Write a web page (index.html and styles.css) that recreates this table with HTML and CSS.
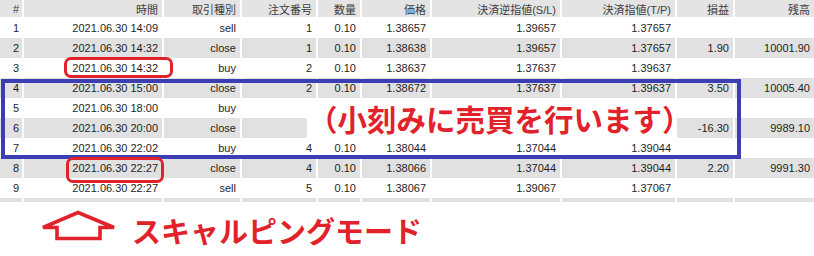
FILE: index.html
```html
<!DOCTYPE html>
<html lang="ja">
<head>
<meta charset="utf-8">
<title>取引履歴</title>
<link rel="stylesheet" href="styles.css">
</head>
<body>
<div class="shot">
  <div class="table">
    <div class="row head">
      <div class="c num">#</div><div class="c">時間</div><div class="c">取引種別</div><div class="c">注文番号</div><div class="c">数量</div><div class="c">価格</div><div class="c">決済逆指値(S/L)</div><div class="c">決済指値(T/P)</div><div class="c">損益</div><div class="c">残高</div>
    </div>
    <div class="row odd">
      <div class="c num">1</div><div class="c">2021.06.30 14:09</div><div class="c">sell</div><div class="c">1</div><div class="c">0.10</div><div class="c">1.38657</div><div class="c">1.39657</div><div class="c">1.37657</div><div class="c"></div><div class="c"></div>
    </div>
    <div class="row even">
      <div class="c num">2</div><div class="c">2021.06.30 14:32</div><div class="c">close</div><div class="c">1</div><div class="c">0.10</div><div class="c">1.38638</div><div class="c">1.39657</div><div class="c">1.37657</div><div class="c">1.90</div><div class="c">10001.90</div>
    </div>
    <div class="row odd">
      <div class="c num">3</div><div class="c">2021.06.30 14:32</div><div class="c">buy</div><div class="c">2</div><div class="c">0.10</div><div class="c">1.38637</div><div class="c">1.37637</div><div class="c">1.39637</div><div class="c"></div><div class="c"></div>
    </div>
    <div class="row even">
      <div class="c num">4</div><div class="c">2021.06.30 15:00</div><div class="c">close</div><div class="c">2</div><div class="c">0.10</div><div class="c">1.38672</div><div class="c">1.37637</div><div class="c">1.39637</div><div class="c">3.50</div><div class="c">10005.40</div>
    </div>
    <div class="row odd">
      <div class="c num">5</div><div class="c">2021.06.30 18:00</div><div class="c">buy</div><div class="c"></div><div class="c"></div><div class="c"></div><div class="c"></div><div class="c"></div><div class="c"></div><div class="c"></div>
    </div>
    <div class="row even">
      <div class="c num">6</div><div class="c">2021.06.30 20:00</div><div class="c">close</div><div class="c"></div><div class="c"></div><div class="c"></div><div class="c"></div><div class="c"></div><div class="c">-16.30</div><div class="c">9989.10</div>
    </div>
    <div class="row odd">
      <div class="c num">7</div><div class="c">2021.06.30 22:02</div><div class="c">buy</div><div class="c">4</div><div class="c">0.10</div><div class="c">1.38044</div><div class="c">1.37044</div><div class="c">1.39044</div><div class="c"></div><div class="c"></div>
    </div>
    <div class="row even">
      <div class="c num">8</div><div class="c">2021.06.30 22:27</div><div class="c">close</div><div class="c">4</div><div class="c">0.10</div><div class="c">1.38066</div><div class="c">1.37044</div><div class="c">1.39044</div><div class="c">2.20</div><div class="c">9991.30</div>
    </div>
    <div class="row odd">
      <div class="c num">9</div><div class="c">2021.06.30 22:27</div><div class="c">sell</div><div class="c">5</div><div class="c">0.10</div><div class="c">1.38067</div><div class="c">1.39067</div><div class="c">1.37067</div><div class="c"></div><div class="c"></div>
    </div>
    <div class="row even stub">
      <div class="c"></div><div class="c"></div><div class="c"></div><div class="c"></div><div class="c"></div><div class="c"></div><div class="c"></div><div class="c"></div><div class="c"></div><div class="c"></div>
    </div>
  </div>

  <div class="mode">
    <svg class="arrow" width="80" height="34" viewBox="0 0 80 34">
      <polygon points="2,17.5 37,2.5 73,17.5 59,17.5 59,28.5 16,28.5 16,17.5" fill="none" stroke="#e1222a" stroke-width="3.6" stroke-linejoin="miter"/>
    </svg>
    <span class="mode-text">スキャルピングモード</span>
  </div>

  <div class="note">（小刻みに売買を行います）</div>
  <div class="frame"></div>
  <div class="mark mark-3"></div>
  <div class="mark mark-8"></div>
</div>
</body>
</html>
```

FILE: styles.css
```css
* { box-sizing: border-box; }
html, body { margin: 0; padding: 0; background: #ffffff; }
.shot {
  position: relative;
  width: 814px;
  height: 256px;
  overflow: hidden;
  font-family: "Liberation Sans", "Noto Sans CJK JP", sans-serif;
  font-size: 11px;
  color: #1e1e1e;
}
.table { display: flex; flex-direction: column; }
.row {
  display: grid;
  grid-template-columns: 22px 138px 76px 74px 42px 68px 128px 113px 56px 79px;
  column-gap: 2px;
  height: 20px;
}
.row.head { height: 18px; }
.row.head .c {
  background: #e4e4e4;
  color: #404040;
  height: 17px;
}
.row.even .c { background: #e1e1e1; }
.row.stub { height: 4px; margin-top: 0; }
.c {
  display: flex;
  align-items: center;
  justify-content: flex-end;
  padding-right: 4px;
  white-space: nowrap;
}
.c.num { justify-content: flex-start; padding-left: 13px; padding-right: 0; }

.mode {
  display: flex;
  align-items: flex-start;
  gap: 11px;
  padding-left: 41px;
  margin-top: 6px;
}
.arrow { display: block; flex: none; margin-top: 2px; }
.mode-text {
  font-family: "Noto Sans CJK JP", sans-serif;
  font-weight: 700;
  font-size: 29px;
  letter-spacing: 0;
  line-height: 38px;
  margin-top: 3px;
  color: #e1222a;
}

.note {
  position: absolute;
  left: 307px;
  top: 98px;
  width: 370px;
  height: 40px;
  background: #ffffff;
  display: flex;
  align-items: center;
  padding-left: 1px;
  font-family: "Noto Sans CJK JP", sans-serif;
  font-weight: 700;
  font-size: 29.5px;
  color: #e1222a;
  white-space: nowrap;
}
.frame {
  position: absolute;
  left: 1px;
  top: 79px;
  width: 740px;
  height: 80px;
  border: 4px solid #3b3fb3;
}
.mark {
  position: absolute;
  border: 3px solid #e1222a;
  border-radius: 7px;
}
.mark-3 { left: 64px; top: 57px; width: 109px; height: 21px; }
.mark-8 { left: 66px; top: 157px; width: 98px; height: 26px; }
```
